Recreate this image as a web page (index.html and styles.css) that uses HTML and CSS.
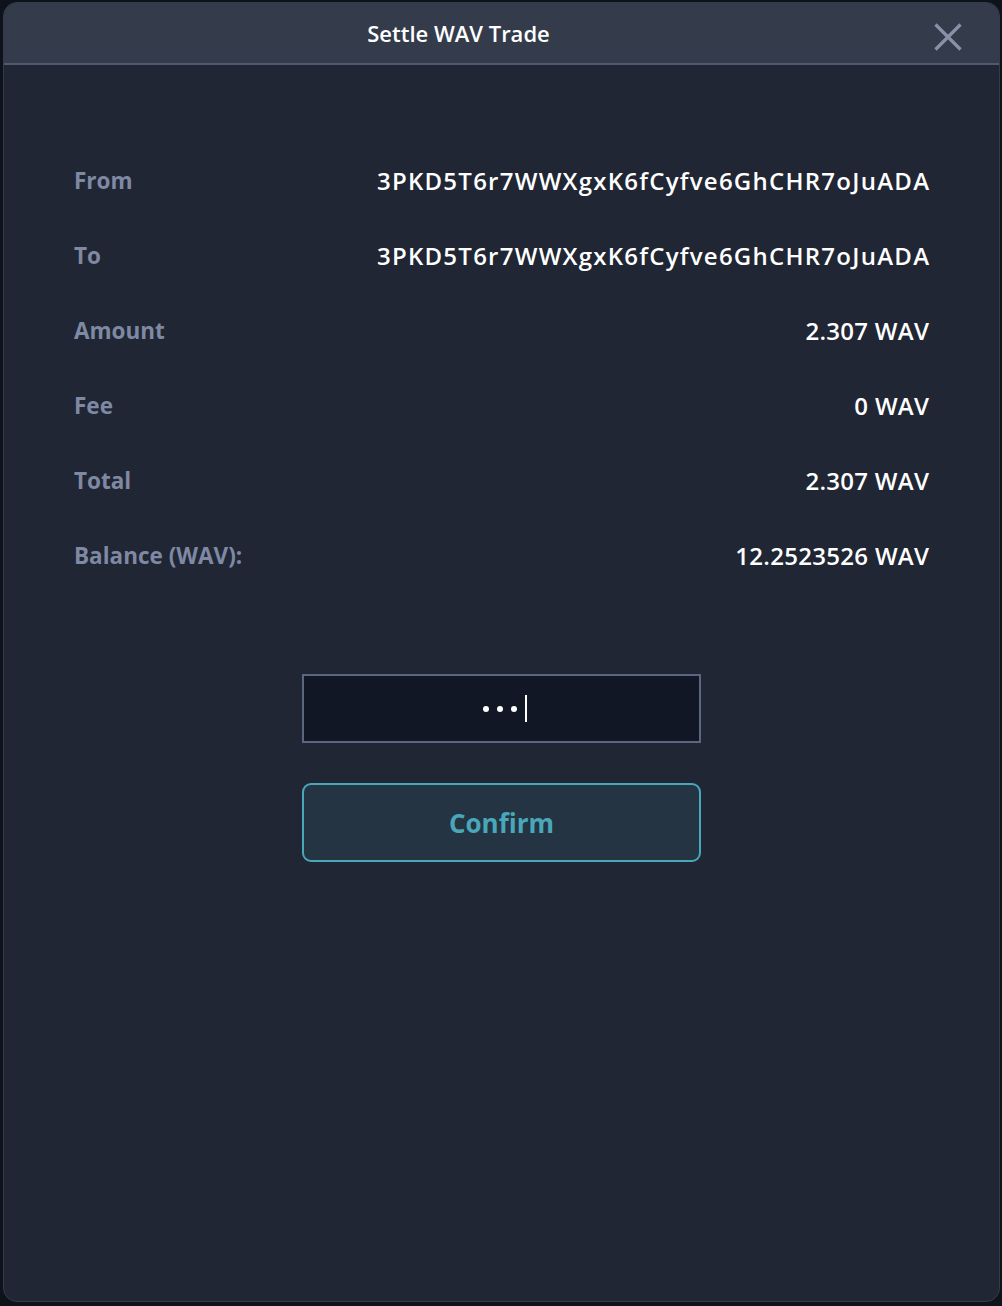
FILE: index.html
```html
<!DOCTYPE html>
<html lang="en">
<head>
<meta charset="utf-8">
<title>Settle WAV Trade</title>
<link rel="stylesheet" href="styles.css">
</head>
<body>
<div class="modal">
  <div class="header">
    <div class="title">Settle WAV Trade</div>
    <div class="close">
      <svg width="28" height="28" viewBox="0 0 28 28"><path d="M1.5 1.5 L26.5 26.5 M26.5 1.5 L1.5 26.5" stroke="#8891a8" stroke-width="3.2" stroke-linecap="butt" fill="none"/></svg>
    </div>
  </div>
  <div class="content">
    <div class="rows">
      <div class="row"><span class="label">From</span><span class="value address">3PKD5T6r7WWXgxK6fCyfve6GhCHR7oJuADA</span></div>
      <div class="row"><span class="label">To</span><span class="value address">3PKD5T6r7WWXgxK6fCyfve6GhCHR7oJuADA</span></div>
      <div class="row"><span class="label">Amount</span><span class="value">2.307 WAV</span></div>
      <div class="row"><span class="label">Fee</span><span class="value">0 WAV</span></div>
      <div class="row"><span class="label">Total</span><span class="value">2.307 WAV</span></div>
      <div class="row"><span class="label">Balance (WAV):</span><span class="value">12.2523526 WAV</span></div>
    </div>
    <div class="form">
      <div class="password"><span class="dot"></span><span class="dot"></span><span class="dot"></span><span class="caret"></span></div>
      <div class="confirm">Confirm</div>
    </div>
  </div>
</div>
</body>
</html>
```
FILE: styles.css
```css
html, body {
  margin: 0;
  padding: 0;
  background: #0e121a;
}
body {
  font-family: "Open Sans", "Noto Sans", sans-serif;
  padding: 2px 2px 4px 3px;
  height: 1306px;
  box-sizing: border-box;
}
.modal {
  box-sizing: border-box;
  width: 997px;
  height: 1300px;
  background: #202633;
  border: 1px solid #333c4c;
  border-radius: 14px;
  overflow: hidden;
  display: flex;
  flex-direction: column;
}
.header {
  box-sizing: border-box;
  height: 62px;
  flex: none;
  background: #343c4c;
  border-bottom: 2px solid #4e5a70;
  display: flex;
  align-items: center;
}
.title {
  flex: 1;
  text-align: center;
  color: #ffffff;
  font-size: 22px;
  font-weight: 600;
}
.close {
  width: 86px;
  padding-right: 16px;
  padding-top: 8px;
  box-sizing: border-box;
  display: flex;
  justify-content: center;
  align-items: center;
  height: 100%;
}
.close svg { display: block; }
.content {
  padding: 78px 70px 0 70px;
}
.rows {
  display: flex;
  flex-direction: column;
}
.row {
  display: flex;
  justify-content: space-between;
  align-items: center;
  height: 75px;
}
.label {
  color: #7f89a3;
  font-size: 22.5px;
  font-weight: 700;
}
.value {
  color: #ffffff;
  font-size: 24px;
  font-weight: 600;
  letter-spacing: 0.3px;
  margin-right: -0.3px;
}
.address {
  letter-spacing: 1.25px;
  margin-right: -1.25px;
}
.form {
  display: flex;
  flex-direction: column;
  align-items: center;
  gap: 40px;
  margin-top: 81px;
}
.password {
  box-sizing: border-box;
  width: 399px;
  height: 69px;
  background: #111725;
  border: 2px solid #5b6680;
  display: flex;
  justify-content: center;
  align-items: center;
  gap: 8px;
  padding-left: 6px;
}
.dot {
  width: 6px;
  height: 6px;
  border-radius: 50%;
  background: #ffffff;
}
.caret {
  width: 2px;
  height: 27px;
  background: #ffffff;
}
.confirm {
  box-sizing: border-box;
  width: 399px;
  height: 79px;
  background: #243443;
  border: 2px solid #48a8ba;
  border-radius: 9px;
  display: flex;
  justify-content: center;
  align-items: center;
  color: #4aa7b9;
  font-size: 26px;
  font-weight: 700;
}
```
